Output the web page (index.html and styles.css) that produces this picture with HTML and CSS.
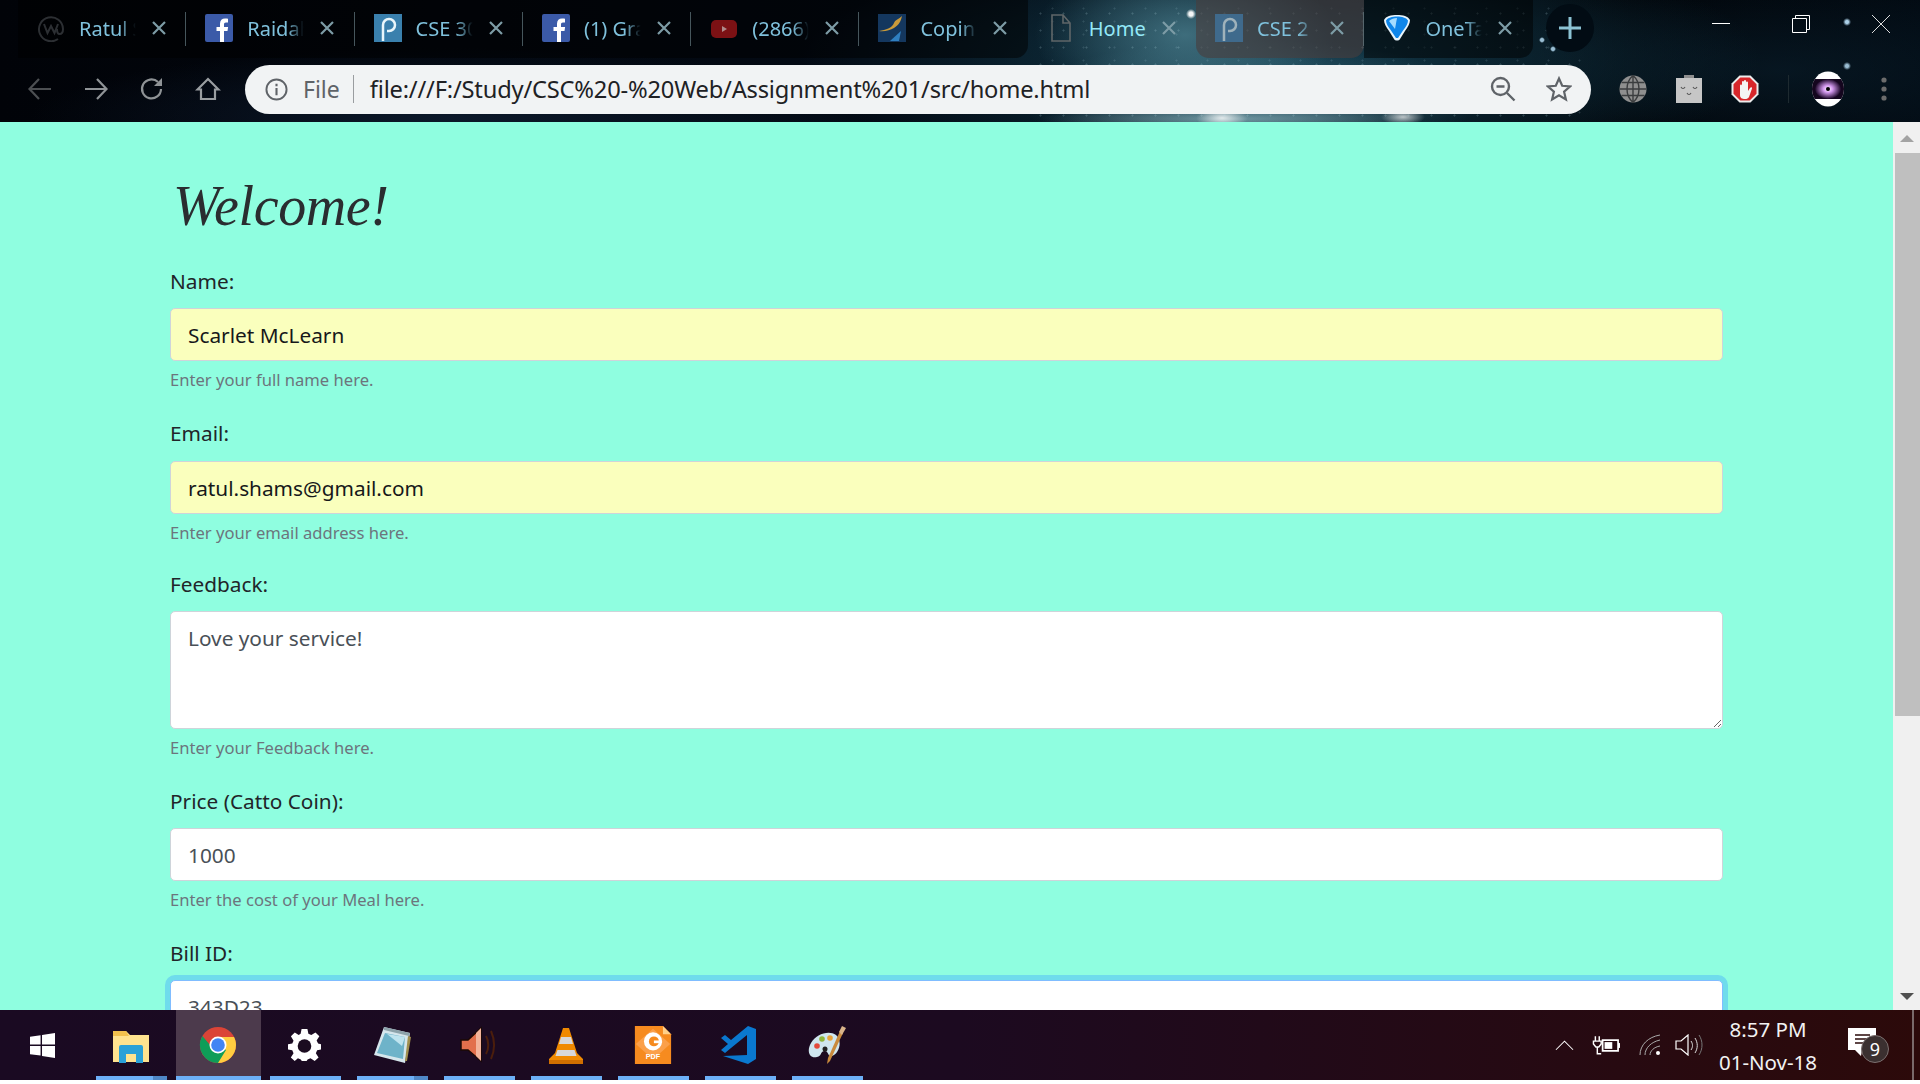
FILE: index.html
```html
<!DOCTYPE html>
<html lang="en">
<head>
<meta charset="utf-8">
<title>Home</title>
<link rel="stylesheet" href="styles.css">
</head>
<body>
<div class="browser">
  <header class="chrome">
    <div class="tabstrip">
      <div class="tab tab-bg">
        <svg class="fav" viewBox="0 0 28 28"><path d="M21 25A12 12 0 1 1 26 15c0 3-1.500 5-3.500 5S20 18 20 15" fill="none" stroke="#2c2f33" stroke-width="2"/><path d="M7 10l3.500 9 3.500-7 3.500 7 3.500-9" fill="none" stroke="#2c2f33" stroke-width="2"/></svg>
        <span class="tab-title">Ratul S</span>
        <svg class="tab-x" viewBox="0 0 14 14"><path d="M1 1l12 12M13 1L1 13"/></svg>
      </div>
      <div class="tab tab-bg">
        <svg class="fav" viewBox="0 0 28 28"><rect width="28" height="28" rx="2" fill="#3b5aa8"/><path d="M19 28V17h3.500l.6-4H19v-2.600c0-1.300.5-2 2-2h2V4.800C22.400 4.700 21.300 4.600 20 4.600c-3 0-5 1.800-5 5.200V13h-3.500v4H15v11z" fill="#fff"/></svg>
        <span class="tab-title">Raidah</span>
        <svg class="tab-x" viewBox="0 0 14 14"><path d="M1 1l12 12M13 1L1 13"/></svg>
      </div>
      <div class="tab tab-bg">
        <svg class="fav" viewBox="0 0 28 28"><rect width="28" height="28" fill="#3a80ad"/><path d="M9 27V11a6 6 0 1 1 6 6h-2" fill="none" stroke="#eaf6fb" stroke-width="2.500"/></svg>
        <span class="tab-title">CSE 30</span>
        <svg class="tab-x" viewBox="0 0 14 14"><path d="M1 1l12 12M13 1L1 13"/></svg>
      </div>
      <div class="tab tab-bg">
        <svg class="fav" viewBox="0 0 28 28"><rect width="28" height="28" rx="2" fill="#3b5aa8"/><path d="M19 28V17h3.500l.6-4H19v-2.600c0-1.300.5-2 2-2h2V4.800C22.400 4.700 21.300 4.600 20 4.600c-3 0-5 1.800-5 5.200V13h-3.500v4H15v11z" fill="#fff"/></svg>
        <span class="tab-title">(1) Gra</span>
        <svg class="tab-x" viewBox="0 0 14 14"><path d="M1 1l12 12M13 1L1 13"/></svg>
      </div>
      <div class="tab tab-bg">
        <svg class="fav" viewBox="0 0 28 28"><rect x="1" y="6" width="26" height="18" rx="5" fill="#7c1114"/><path d="M12 12l5 3-5 3z" fill="#b08a8a"/></svg>
        <span class="tab-title">(2866)</span>
        <svg class="tab-x" viewBox="0 0 14 14"><path d="M1 1l12 12M13 1L1 13"/></svg>
      </div>
      <div class="tab tab-bg tab-end">
        <svg class="fav" viewBox="0 0 28 28"><rect width="28" height="28" fill="#14375e"/><path d="M1 17c7-1 13-3 15-8 1-3 5-4 8-7-1 5-3 9-8 12-4 2-9 4-15 3z" fill="#c99a3a"/><path d="M12 27l11-10-2 10z" fill="#2f7fc0"/></svg>
        <span class="tab-title">Copin</span>
        <svg class="tab-x" viewBox="0 0 14 14"><path d="M1 1l12 12M13 1L1 13"/></svg>
      </div>
      <div class="tab tab-active">
        <svg class="fav" viewBox="0 0 28 28"><path d="M5 1h11l7 8v18H5zM16 1v8h7" fill="none" stroke="#5f6668" stroke-width="1.600"/></svg>
        <span class="tab-title">Home</span>
        <svg class="tab-x" viewBox="0 0 14 14"><path d="M1 1l12 12M13 1L1 13"/></svg>
      </div>
      <div class="tab tab-hover">
        <svg class="fav" viewBox="0 0 28 28"><rect width="28" height="28" fill="#3f6a8c"/><path d="M9 27V11a6 6 0 1 1 6 6h-2" fill="none" stroke="#9fb2bb" stroke-width="2.500"/></svg>
        <span class="tab-title">CSE 2</span>
        <svg class="tab-x" viewBox="0 0 14 14"><path d="M1 1l12 12M13 1L1 13"/></svg>
      </div>
      <div class="tab tab-bg tab-end">
        <svg class="fav" viewBox="0 0 28 28"><path d="M1 6c2-4 7-5 13-5s11 1 13 5c0 3-2 7-5 11l-5 8c-1 2-5 2-6 0l-5-8C3 13 1 9 1 6z" fill="#e8f4fb"/><path d="M3 6.500c2-3 6-4 11-4s9 1 11 4c0 3-2 6-5 10l-5 7.500h-2L8 16.500C5 12.500 3 9.500 3 6.500z" fill="#0f86ea"/><path d="M6 7c2-2 5-3 8-3l-2 11z" fill="#a5dcff"/></svg>
        <span class="tab-title">OneTab</span>
        <svg class="tab-x" viewBox="0 0 14 14"><path d="M1 1l12 12M13 1L1 13"/></svg>
      </div>
      <div class="new-tab"><svg viewBox="0 0 22 22" class="plus"><path d="M11 0v22M0 11h22" stroke="#8cc3d4" stroke-width="3"/></svg></div>
      <div class="window-controls">
        <svg class="win-btn" viewBox="0 0 18 18"><path d="M0 8.500h18" stroke="#fff" stroke-width="1"/></svg>
        <svg class="win-btn" viewBox="0 0 18 18"><path d="M.5 3.500h14v14H.5zM3.500 3.500V.5h14v14h-3" fill="none" stroke="#fff" stroke-width="1"/></svg>
        <svg class="win-btn" viewBox="0 0 18 18"><path d="M0 0l18 18M18 0L0 18" stroke="#ddd" stroke-width="1"/></svg>
      </div>
    </div>
    <div class="toolbar">
      <svg class="nav" viewBox="0 0 26 26"><path d="M24 13H3M12 3L2.500 13 12 23" fill="none" stroke="#4c4f52" stroke-width="2.200"/></svg>
      <svg class="nav" viewBox="0 0 26 26"><path d="M2 13h21M14 3l9.500 10L14 23" fill="none" stroke="#8f9396" stroke-width="2.200"/></svg>
      <svg class="nav" viewBox="0 0 26 26"><path d="M22 13a9.500 9.500 0 1 1-3-7" fill="none" stroke="#8f9396" stroke-width="2.200"/><path d="M23 2v8h-8z" fill="#8f9396"/></svg>
      <svg class="nav nav-home" viewBox="0 0 26 26"><path d="M2.500 13.500L13 3l10.500 10.500H20V23H6v-9.500z" fill="none" stroke="#9a9ea1" stroke-width="2.200"/></svg>
      <div class="omnibox">
        <svg class="info" viewBox="0 0 24 24"><circle cx="12" cy="12" r="10.500" fill="none" stroke="#5f6368" stroke-width="2"/><path d="M12 10.500V18M12 6v2.500" stroke="#5f6368" stroke-width="2.200"/></svg>
        <span class="origin">File</span>
        <span class="url">file:///F:/Study/CSC%20-%20Web/Assignment%201/src/home.html</span>
        <svg class="omni-icon" viewBox="0 0 26 26"><circle cx="10.500" cy="10.500" r="8.500" fill="none" stroke="#5f6368" stroke-width="2.400"/><path d="M6.500 10.500h8M17 17l7.500 7.500" stroke="#5f6368" stroke-width="2.400"/></svg>
        <svg class="omni-icon omni-star" viewBox="0 0 26 26"><path d="M13 2.500l3.200 7.300 7.800.7-5.900 5.200 1.800 7.800L13 19.400l-6.900 4.100 1.800-7.800L2 10.500l7.800-.7z" fill="none" stroke="#5f6368" stroke-width="2.200"/></svg>
      </div>
      <div class="extensions">
        <svg class="ext" viewBox="0 0 28 28"><circle cx="14" cy="14" r="13.500" fill="#8f8f8f"/><path d="M14 .5v27M.5 14h27M2.500 7.500h23M2.500 20.500h23M14 .5c-8 7-8 20 0 27M14 .5c8 7 8 20 0 27" fill="none" stroke="#3b3d3f" stroke-width="1.400"/></svg>
        <svg class="ext" viewBox="0 0 28 28"><path d="M9 0h10v3h8v25H1V3h8z" fill="#c6c6c6"/><path d="M9 0h10v3H9z" fill="#8e8e8e"/><path d="M6 12c1 2 3 2 4 0M18 12c1 2 3 2 4 0M12 18c1 2 3 2 4 0" fill="none" stroke="#555" stroke-width="1.100"/></svg>
        <svg class="ext" viewBox="0 0 28 28"><path d="M8.500.5h11l8 8v11l-8 8h-11l-8-8v-11z" fill="#ececec"/><path d="M9.300 2.500h9.400l6.800 6.800v9.400l-6.800 6.800H9.300l-6.800-6.800V9.300z" fill="#d8262a"/><path d="M9 20V10.500a1 1 0 0 1 2 0V14V7a1 1 0 0 1 2 0v7V6a1 1 0 0 1 2 0v8V7.500a1 1 0 0 1 2 0V16l2-3c1-1.500 2.500-.5 2 .5L18 22c-1 1.500-2 2-4 2-3 0-5-1-5-4z" fill="#f4f4f4"/></svg>
        <span class="ext-sep"></span>
        <svg class="avatar" viewBox="0 0 32 36"><defs><clipPath id="av"><ellipse cx="16" cy="18" rx="16" ry="17.500"/></clipPath><radialGradient id="nebula"><stop offset="0" stop-color="#fff"/><stop offset=".35" stop-color="#d59af0"/><stop offset="1" stop-color="#1a0626"/></radialGradient></defs><g clip-path="url(#av)"><rect width="32" height="36" fill="#fff"/><rect y="8" width="32" height="20" fill="#14061e"/><ellipse cx="16" cy="18" rx="13" ry="10" fill="url(#nebula)"/><circle cx="16" cy="18" r="2" fill="#000"/></g></svg>
        <svg class="dots" viewBox="0 0 6 24"><circle cx="3" cy="3" r="2.600" fill="#6c6c6c"/><circle cx="3" cy="12" r="2.600" fill="#6c6c6c"/><circle cx="3" cy="21" r="2.600" fill="#6c6c6c"/></svg>
      </div>
    </div>
  </header>

  <div class="viewport">
    <main class="page">
      <h1 class="welcome">Welcome!</h1>
      <form class="feedback-form">
        <div class="field">
          <label class="field-label" for="name">Name:</label>
          <input class="control autofilled" id="name" type="text" value="Scarlet McLearn">
          <small class="help">Enter your full name here.</small>
        </div>
        <div class="field field-email">
          <label class="field-label" for="email">Email:</label>
          <input class="control autofilled" id="email" type="text" value="ratul.shams@gmail.com">
          <small class="help">Enter your email address here.</small>
        </div>
        <div class="field">
          <label class="field-label" for="feedback">Feedback:</label>
          <textarea class="control control-area" id="feedback">Love your service!</textarea>
          <small class="help">Enter your Feedback here.</small>
        </div>
        <div class="field">
          <label class="field-label" for="price">Price (Catto Coin):</label>
          <input class="control" id="price" type="text" value="1000">
          <small class="help">Enter the cost of your Meal here.</small>
        </div>
        <div class="field">
          <label class="field-label" for="bill">Bill ID:</label>
          <input class="control control-focus" id="bill" type="text" value="343D23">
        </div>
      </form>
    </main>
    <aside class="scrollbar">
      <span class="arrow arrow-up"></span>
      <span class="thumb"></span>
      <span class="arrow arrow-down"></span>
    </aside>
  </div>

  <footer class="taskbar">
    <div class="task start">
      <svg class="task-icon win" viewBox="0 0 26 26"><path d="M0 4l11-1.600V12H0zM12.500 2.200L26 0v12H12.500zM0 13.500h11v10L0 22zM12.500 13.500H26V26l-13.500-2z" fill="#fff"/></svg>
    </div>
    <div class="task pinned stacked">
      <svg class="task-icon" viewBox="0 0 38 38"><path d="M1 5h13l4 4h19v27H1z" fill="#ffe38f"/><path d="M1 5h13l3 5H1z" fill="#f2c14e"/><path d="M7 37V21a2 2 0 0 1 2-2h20a2 2 0 0 1 2 2v16h-7v-9H14v9z" fill="#2aa1d8"/></svg>
    </div>
    <div class="task pinned active">
      <svg class="task-icon" viewBox="0 0 38 38"><circle cx="19" cy="19" r="18" fill="#db4437"/><path d="M19 19L3.400 28 19 37c10 0 18-8 18-18 0-3-.7-5.500-2-8H19z" fill="#ffcd40"/><path d="M19 19l-8 0L3.400 10A18 18 0 0 0 19 37l8-13z" fill="#0f9d58"/><circle cx="19" cy="19" r="8.500" fill="#fff"/><circle cx="19" cy="19" r="6.800" fill="#4285f4"/></svg>
    </div>
    <div class="task pinned">
      <svg class="task-icon icon-gear" viewBox="0 0 34 34"><path d="M14 1h6l1 5 3 1.300 4.300-2.800 4 4-2.800 4.300L31 16l3 .8v5.400L30 23l-1.300 3 2.800 4.300-4 3.700-4.300-2.800-3 1.200-1 1.600h-5l-1-1.600-3-1.200L6.900 34l-4-3.700L5.700 26l-1.300-3-4.400-.8v-5.400l4.400-.8 1.300-3L3 8.500l4-4 4 2.800 2-1.300z" fill="#fff" transform="translate(0 -1)"/><circle cx="17" cy="17.500" r="7" fill="#1b0c20"/></svg>
    </div>
    <div class="task pinned stacked">
      <svg class="task-icon" viewBox="0 0 38 38"><path d="M11 1l26 6-5 30L1 29z" fill="#d5e6ec"/><path d="M11 1l26 6-1 3-25-6z" fill="#8da3ab"/><path d="M4 27l8-20 20 4-2 22z" fill="#6eb3c9"/><path d="M14 8l18 3-3 9z" fill="#bfe4ef"/><path d="M35 10l3 1-4 24h-2z" fill="#a08f4f"/></svg>
    </div>
    <div class="task pinned">
      <svg class="task-icon" viewBox="0 0 38 38"><path d="M1 14h7L21 2v33L8 24H1z" fill="#e2704c" stroke="#1c0a05" stroke-width="1.500"/><path d="M21 2v33l-5-5V7z" fill="#f3b49a"/><path d="M26 10c3 5 3 13 0 18M31 5c4 9 4 19 0 28" fill="none" stroke="#4b1e0c" stroke-width="2"/></svg>
    </div>
    <div class="task pinned">
      <svg class="task-icon" viewBox="0 0 38 38"><path d="M2 33l6-6 8-25h6l8 25 6 6v5H2z" fill="#f08a00"/><path d="M14 11h10l2 7H12z" fill="#d8d8d8"/><path d="M10.500 24H27.500l2 6h-21z" fill="#d8d8d8"/><path d="M2 34h34v4H2z" fill="#d06f00"/></svg>
    </div>
    <div class="task pinned">
      <svg class="task-icon" viewBox="0 0 40 42"><path d="M0 0h31l9 9v33H0z" fill="#f68b1f"/><path d="M31 0l9 9h-9z" fill="#ffd089"/><path d="M20 3l19 17-19 17L1 20z" fill="#fba04a"/><circle cx="20" cy="17" r="10" fill="#fff"/><circle cx="21" cy="17" r="5.500" fill="#f68b1f"/><path d="M21 16h9v3h-9z" fill="#fff"/><text class="pdf-mark" x="20" y="37">PDF</text></svg>
    </div>
    <div class="task pinned">
      <svg class="task-icon" viewBox="0 0 38 38"><path d="M27 0l8 3v30l-8 5L2 30l24-1V9L10 22l-6 5-4-3 7-6-7-6 4-3 6 5z" fill="#0a78cf"/></svg>
    </div>
    <div class="task pinned">
      <svg class="task-icon" viewBox="0 0 38 38"><path d="M28 9C21 4 8 8 3 17c-5 9-1 16 6 14 5-1 3-5 7-6 5-1 3 6 8 5 7-2 11-15 4-21z" fill="#cfe6ee"/><circle cx="9" cy="20" r="2.800" fill="#e34a3b"/><circle cx="14" cy="13" r="2.800" fill="#8fb63c"/><circle cx="22" cy="12" r="2.800" fill="#e9a33b"/><circle cx="17" cy="23" r="2.500" fill="#222"/><path d="M32 5l3 2-13 28-3 3 1-6z" fill="#c98a3c"/><path d="M31 6l3-6 4 2-4 7z" fill="#d9b48a"/></svg>
    </div>
    <div class="tray">
      <svg class="tray-icon tray-chevron" viewBox="0 0 20 12"><path d="M1 11l9-9 9 9" fill="none" stroke="#fff" stroke-width="1.100"/></svg>
      <svg class="tray-icon tray-battery" viewBox="0 0 29 20"><path d="M3.500 1v5M7.500 1v5M1.500 6h8v3l-2.500 3h-3L1.500 9zM5.500 12v7h4" fill="none" stroke="#fff" stroke-width="1.500"/><path d="M11 5h16v11H11z" fill="none" stroke="#fff" stroke-width="1.800"/><rect x="13" y="7" width="8" height="7" fill="#fff"/><rect x="27" y="8" width="2" height="5" fill="#fff"/></svg>
      <svg class="tray-icon tray-wifi" viewBox="0 0 22 22"><path d="M1 21C1 11 9 3 21 1M6 21c0-7 6-13 15-15M11 21c0-4 4-8 10-9" fill="none" stroke="#aaa" stroke-width="1"/><circle cx="19" cy="19" r="2" fill="#fff"/></svg>
      <svg class="tray-icon tray-volume" viewBox="0 0 28 22"><path d="M1 7h5l7-6v20l-7-6H1z" fill="none" stroke="#fff" stroke-width="1.200"/><path d="M16 7c2 3 2 6 0 9M20 4c3 5 3 10 0 15" fill="none" stroke="#ddd" stroke-width="1"/><path d="M24 1c4 6 4 14 0 20" fill="none" stroke="#777" stroke-width="1"/></svg>
      <div class="clock"><span>8:57 PM</span><span>01-Nov-18</span></div>
      <div class="notify">
        <svg class="note" viewBox="0 0 28 28"><path d="M0 0h28v22H14l-1 6-6-6H0z" fill="#fff"/><path d="M7 7h15M7 11h15M7 15h15" stroke="#2a0a0a" stroke-width="1.500"/></svg>
        <span class="badge">9</span>
      </div>
      <span class="show-desktop"></span>
    </div>
  </footer>
</div>
</body>
</html>
```
FILE: styles.css
```css
* { box-sizing: border-box; }
html, body { margin: 0; padding: 0; height: 1084px; overflow: hidden; background: #fff; }
body { font-family: "Noto Sans", "Open Sans", sans-serif; color: #212529; }
.browser { width: 1920px; height: 1080px; display: flex; flex-direction: column; overflow: hidden; }

/* Window frame */
.chrome {
  position: relative; height: 122px; flex: none; overflow: hidden;
  background-color: #02060c;
  background-image:
    radial-gradient(circle at 1191px 14px, rgba(255,255,255,.95) 0 2px, transparent 5px),
    radial-gradient(circle at 1847px 22px, rgba(190,230,255,.9) 0 1.500px, transparent 4px),
    radial-gradient(circle at 1847px 66px, rgba(190,230,255,.8) 0 1.500px, transparent 4px),
    radial-gradient(circle at 1542px 40px, rgba(190,230,255,.8) 0 1.500px, transparent 3px),
    radial-gradient(circle at 1553px 49px, rgba(190,230,255,.8) 0 1.500px, transparent 3px),
    radial-gradient(ellipse 22px 8px at 1403px 117px, rgba(255,255,255,.7), transparent 100%),
    radial-gradient(ellipse 26px 10px at 1222px 118px, rgba(255,255,255,.8), transparent 100%),
    radial-gradient(ellipse 190px 12px at 1230px 119px, rgba(170,210,218,.55), transparent 100%),
    radial-gradient(ellipse 150px 80px at 1185px 35px, rgba(74,125,140,.8), transparent 100%),
    radial-gradient(ellipse 230px 60px at 1250px 100px, rgba(70,120,135,.7), transparent 100%),
    radial-gradient(ellipse 480px 125px at 1280px 60px, rgba(20,62,80,.9), transparent 100%),
    radial-gradient(ellipse 320px 90px at 1780px 70px, rgba(10,32,46,.6), transparent 100%),
    radial-gradient(ellipse 420px 70px at 450px 118px, rgba(16,32,54,.7), transparent 100%),
    linear-gradient(90deg, #010308 0, #030a14 45%, #041018 70%, #010408 85%, #020a12 100%);
}
.chrome::before {
  content: ""; position: absolute; left: 1026px; top: 0; width: 560px; height: 122px;
  background-image:
    radial-gradient(circle, rgba(190,225,235,.2) 0 .8px, transparent 1.300px),
    radial-gradient(circle, rgba(190,225,235,.13) 0 .8px, transparent 1.300px);
  background-size: 23px 17px, 31px 13px;
  background-position: 3px 5px, 11px 2px;
}
.tabstrip { position: relative; height: 58px; display: flex; align-items: stretch; padding-left: 18px; }
.tab { position: relative; flex: none; width: 168.300px; height: 58px; display: flex; align-items: center; padding-left: 19px; padding-bottom: 2px; }
.tab-bg { background: rgba(0,0,0,.5); }
.tab-bg::after { content: ""; position: absolute; right: 0; top: 12px; height: 34px; width: 1px; background: #46565c; }
.tab-end { border-radius: 0 0 13px 0; }
.tab-end::after { display: none; }
.tab-active { background: transparent; }
.tab-hover { background: rgba(72,62,62,.62); border-radius: 0 0 13px 13px; }
.tab-hover::after { content: ""; position: absolute; right: 0; top: 12px; height: 34px; width: 1px; background: #56666c; }
.fav { width: 28px; height: 28px; flex: none; }
.tab-title {
  flex: none; width: 58px; margin-left: 14px; overflow: hidden; white-space: nowrap; font-size: 20px; color: #7fc1dc;
  -webkit-mask-image: linear-gradient(90deg, #000 70%, transparent 98%);
  mask-image: linear-gradient(90deg, #000 70%, transparent 98%);
}
.tab-active .tab-title { color: #94e8f7; -webkit-mask-image: none; mask-image: none; }
.tab-x { flex: none; width: 14px; height: 14px; margin-left: 15px; fill: none; stroke: #7d9ca6; stroke-width: 2.200; }
.new-tab { flex: none; margin-left: 13px; margin-top: 4px; width: 48px; height: 48px; border-radius: 50%; background: #020c14; display: flex; align-items: center; justify-content: center; }
.plus { width: 22px; height: 22px; }
.window-controls { margin-left: 118px; display: flex; gap: 62px; padding-top: 15px; }
.win-btn { width: 18px; height: 18px; }

.toolbar { position: relative; height: 64px; display: flex; align-items: center; padding-bottom: 2px; padding-left: 27px; }
.nav { width: 26px; height: 26px; flex: none; margin-right: 30px; }
.nav-home { margin-right: 24px; }
.omnibox { flex: none; width: 1346px; height: 49px; border-radius: 25px; background: #f1f3f4; display: flex; align-items: center; padding-left: 20px; color: #202124; }
.info { width: 23px; height: 23px; flex: none; }
.origin { margin-left: 15px; padding-right: 13px; border-right: 1px solid #9a9da0; font-size: 23px; line-height: 28px; color: #5f6368; }
.url { margin-left: 16px; flex: 1; font-size: 23.700px; letter-spacing: -.2px; white-space: nowrap; }
.omni-icon { width: 26px; height: 26px; flex: none; margin-right: 30px; }
.omni-star { margin-right: 19px; }
.extensions { display: flex; align-items: center; margin-left: 28px; }
.ext { width: 28px; height: 28px; flex: none; margin-right: 28px; }
.ext-sep { width: 1px; height: 28px; background: #1e2a30; margin-left: 1px; margin-right: 23px; }
.avatar { width: 32px; height: 36px; flex: none; margin-right: 37px; }
.dots { width: 6px; height: 24px; flex: none; }

/* Page */
.viewport { flex: 1; min-height: 0; display: flex; overflow: hidden; }
.page { flex: 1; min-width: 0; background: #8ffee0; padding-left: 170px; overflow: hidden; }
.welcome { margin: 0; height: 144px; padding-top: 44px; padding-left: 3px; font-family: "Liberation Serif", serif; font-style: italic; font-weight: 400; font-size: 56px; line-height: 80px; letter-spacing: -.4px; color: #2a2d30; }
.feedback-form { width: 1553px; }
.field { margin-bottom: 25px; }
.field-email { margin-bottom: 23px; }
.field-label { display: block; height: 30px; line-height: 30px; font-size: 20.800px; margin-bottom: 12px; }
.field-email .field-label { margin-bottom: 13px; }
.control { display: block; width: 100%; height: 53px; padding: 0 17px; font-family: inherit; font-size: 20.800px; color: #495057; background: #fff; border: 1.500px solid #ced4da; border-radius: 5px; outline: none; }
.autofilled { background: #faffbd; color: #16181a; }
.control-area { height: 118px; padding-top: 11px; line-height: 30px; resize: vertical; }
.control-focus { border-color: #80bdff; box-shadow: 0 0 0 5px #6fdcec; }
.help { display: block; margin-top: 5px; font-size: 16.600px; line-height: 27px; color: #6c757d; }

.scrollbar { position: relative; flex: none; width: 27px; background: #f0f0f0; }
.thumb { position: absolute; left: 2px; right: 0; top: 31px; height: 563px; background: #bfbfbf; }
.arrow { position: absolute; left: 7px; width: 0; height: 0; border-left: 7px solid transparent; border-right: 7px solid transparent; }
.arrow-up { top: 13px; border-bottom: 7px solid #a3a3a3; }
.arrow-down { bottom: 10px; border-top: 7px solid #505050; }

/* Taskbar */
.taskbar { height: 70px; flex: none; display: flex; align-items: stretch; background: linear-gradient(90deg, #1a0a22 0, #1c0a20 50%, #2c0a0a 100%); }
.task { position: relative; flex: none; display: flex; align-items: center; justify-content: center; height: 70px; }
.start { width: 96px; padding-right: 12px; justify-content: flex-start; padding-left: 30px; }
.pinned { width: 71px; margin-right: 16px; }
.pinned::after { content: ""; position: absolute; left: 0; right: 0; bottom: 0; height: 4px; background: #6cb0f7; }
.stacked::before { content: ""; position: absolute; right: 0; bottom: 0; width: 14px; height: 4px; background: #4f88c7; z-index: 1; }
.active { width: 85px; margin-left: -7px; margin-right: 9px; background: #4c3a4c; }
.task-icon { width: 38px; height: 38px; margin-right: 2px; }
.icon-gear { width: 33px; height: 33px; margin-right: 3px; }
.win { width: 25px; height: 25px; }
.pdf-mark { font-family: "Liberation Sans", sans-serif; font-size: 8px; font-weight: 700; fill: #fff; text-anchor: middle; }
.tray { margin-left: auto; display: flex; align-items: center; color: #fff; }
.tray-icon { flex: none; }
.tray-chevron { width: 19px; height: 12px; margin-right: 18px; }
.tray-battery { width: 28px; height: 20px; margin-right: 16px; }
.tray-wifi { width: 28px; height: 22px; margin-right: 11px; }
.tray-volume { width: 28px; height: 22px; margin-right: 14px; }
.clock { width: 102px; display: flex; flex-direction: column; align-items: center; gap: 7px; font-size: 20.500px; line-height: 26px; color: #f2f2f2; white-space: nowrap; }
.notify { position: relative; width: 72px; height: 40px; margin-left: 29px; }
.note { position: absolute; left: 0; top: 3px; width: 28px; height: 28px; }
.badge { position: absolute; left: 13px; top: 10px; width: 28px; height: 28px; border-radius: 50%; background: #3b3030; border: 1px solid #7c7070; font-size: 18px; line-height: 26px; text-align: center; color: #fff; }
.show-desktop { width: 2px; height: 70px; background: #7a6a6a; margin-left: -8px; margin-right: 6px; }
```
